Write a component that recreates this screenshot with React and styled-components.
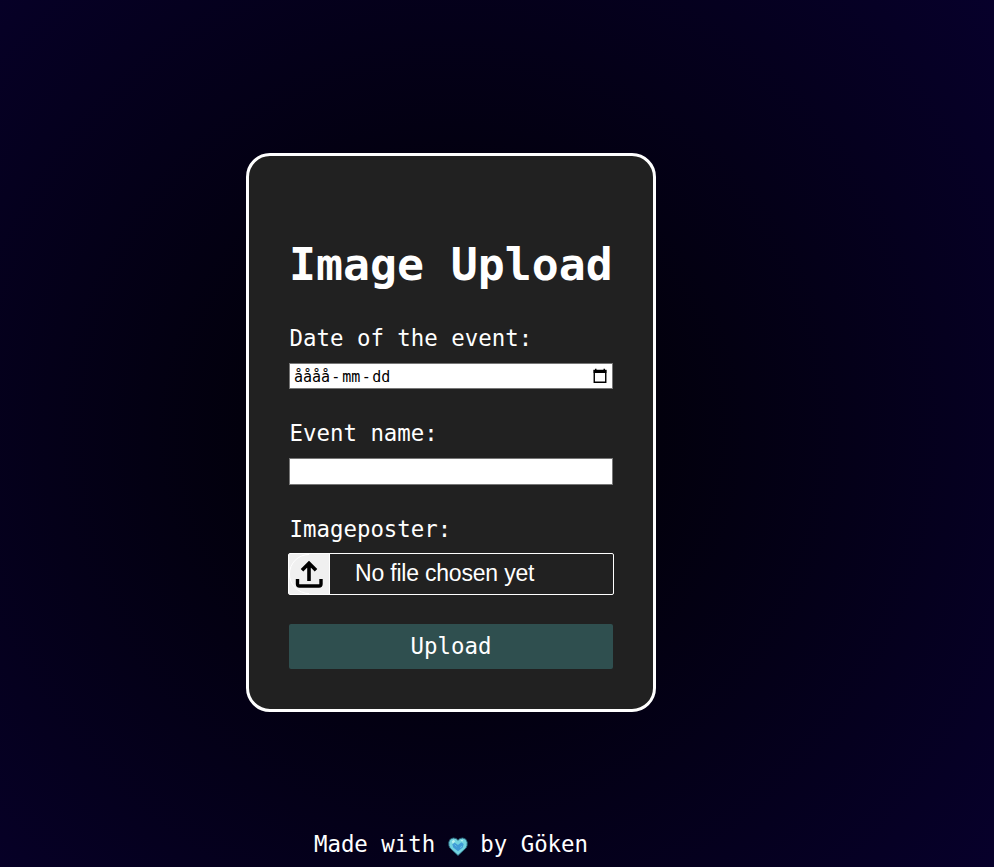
import React from 'react';
import styled, { createGlobalStyle } from 'styled-components';

const mono = `'DejaVu Sans Mono', monospace`;

const Global = createGlobalStyle`
  * { box-sizing: border-box; }
  body { margin: 0; background: #03000f; }
`;

const Page = styled.div`
  width: 994px;
  height: 867px;
  overflow: hidden;
  padding: 153px 92px 0 0;
  display: flex;
  flex-direction: column;
  align-items: center;
  color: #fff;
  font: 22.4px/30px ${mono};
  background: radial-gradient(circle at 451px 433px, #000 0, #07002b 700px);
`;

const Card = styled.form`
  width: 410px;
  height: 559px;
  display: flex;
  flex-direction: column;
  padding: 79px 40px 40px;
  border: 3px solid #fff;
  border-radius: 24px;
  background: #212121;
`;

const Title = styled.h1`
  margin: 0;
  height: 88px;
  font: bold 44.8px/60px ${mono};
  white-space: nowrap;
`;

const Label = styled.label`
  height: 30px;
  margin-bottom: ${(p) => p.$gap}px;
  padding-left: 0.5px;
  white-space: nowrap;
`;

const Field = styled.div`
  height: ${(p) => p.$height}px;
  flex: none;
  margin-bottom: 29px;
  padding: 0 5px 0 4px;
  display: flex;
  align-items: center;
  justify-content: space-between;
  background: #fff;
  border: 1px solid #767676;
  color: #000;
  font: 15px/20px ${mono};
`;

const DateParts = styled.div`
  display: flex;
  padding-top: 2px;
`;

const Part = styled.span`
  padding: 0 ${(p) => p.$pad || 0}px;
`;

const FilePicker = styled.div`
  height: 42px;
  flex: none;
  margin: 0 -1px 29px;
  display: flex;
  align-items: center;
  border: 1px solid #fff;
  border-radius: 2px;
  font: 23px/30px 'Liberation Sans', Arial, sans-serif;
`;

const FileIcon = styled.span`
  width: 41px;
  height: 40px;
  margin-right: 25px;
  background: #f0f0f0;
  svg { display: block; }
`;

const FileName = styled.span`
  padding-bottom: 2px;
  letter-spacing: -0.2px;
  white-space: nowrap;
`;

const Submit = styled.button`
  height: 45px;
  flex: none;
  padding: 0 0 2px;
  border: 0;
  border-radius: 2px;
  background: #2f4f4f;
  color: #fff;
  font: 22.4px/30px ${mono};
`;

const Footer = styled.footer`
  margin-top: 117px;
  height: 30px;
  display: flex;
  align-items: center;
  white-space: pre;
`;

const HeartSvg = styled.svg`
  width: 20px;
  height: 21px;
  margin: 4px -1px 0 -1px;
`;

const CalendarIcon = () => (
  <svg width="14" height="16" viewBox="0 0 14 16">
    <path d="M1.250 2.500h11.500v11.700H1.250z" fill="none" stroke="#000" strokeWidth="1.4" />
    <path d="M.6 2h12.800v3H.6zM2 .8h1.500V3H2zM10.500 .8H12V3h-1.500z" fill="#000" />
  </svg>
);

const UploadIcon = () => (
  <svg width="41" height="40" viewBox="0 0 41 40">
    <path d="M20 .5A19.500 19.500 0 0 0 20 39.500M40.500 0V40" fill="none" stroke="#fff" />
    <path d="M20 27V9M13 16.200L20 9.200L27 16.200" fill="none" stroke="#000" strokeWidth="3.6" />
    <path d="M8.500 25V30Q8.500 32 10.500 32H30Q32 32 32 30V25" fill="none" stroke="#000" strokeWidth="3.4" />
  </svg>
);

const Heart = () => (
  <HeartSvg viewBox="0 0 21 21">
    <path d="M10.500 20L2 12Q.5 10 .8 6Q1.500 2 5.500 1.500Q9 1.500 10.500 4Q12 1.500 15.500 1.500Q19.500 2 20.200 6Q20.500 10 19 12Z" fill="#72d3e0" stroke="#245a70" />
    <path d="M10.500 15.500L5.500 11.500L4.500 8L7 6.500L10.500 9L14 6L16.500 8L15.500 11.500Z" fill="#3f9bd6" />
    <path d="M4 5L6 3.500L7.500 5L5 8ZM13 4L16 3.500L15 5.500Z" fill="#b8f2ef" />
    <path d="M7 8.500L9 10.500M13 12L14.500 10" fill="none" stroke="#69bfe4" />
  </HeartSvg>
);

export default function App() {
  return (
    <>
      <Global />
      <Page>
        <Card>
          <Title>Image Upload</Title>
          <Label $gap={10}>Date of the event:</Label>
          <Field $height={26}>
            <DateParts>
              <Part>åååå</Part>
              <Part $pad={1}>-</Part>
              <Part $pad={1}>mm</Part>
              <Part $pad={0.5}>-</Part>
              <Part $pad={1}>dd</Part>
            </DateParts>
            <CalendarIcon />
          </Field>
          <Label $gap={10}>Event name:</Label>
          <Field $height={27} />
          <Label $gap={9}>Imageposter:</Label>
          <FilePicker>
            <FileIcon><UploadIcon /></FileIcon>
            <FileName>No file chosen yet</FileName>
          </FilePicker>
          <Submit type="button">Upload</Submit>
        </Card>
        <Footer>
          <span>Made with </span>
          <Heart />
          <span> by Göken</span>
        </Footer>
      </Page>
    </>
  );
}
